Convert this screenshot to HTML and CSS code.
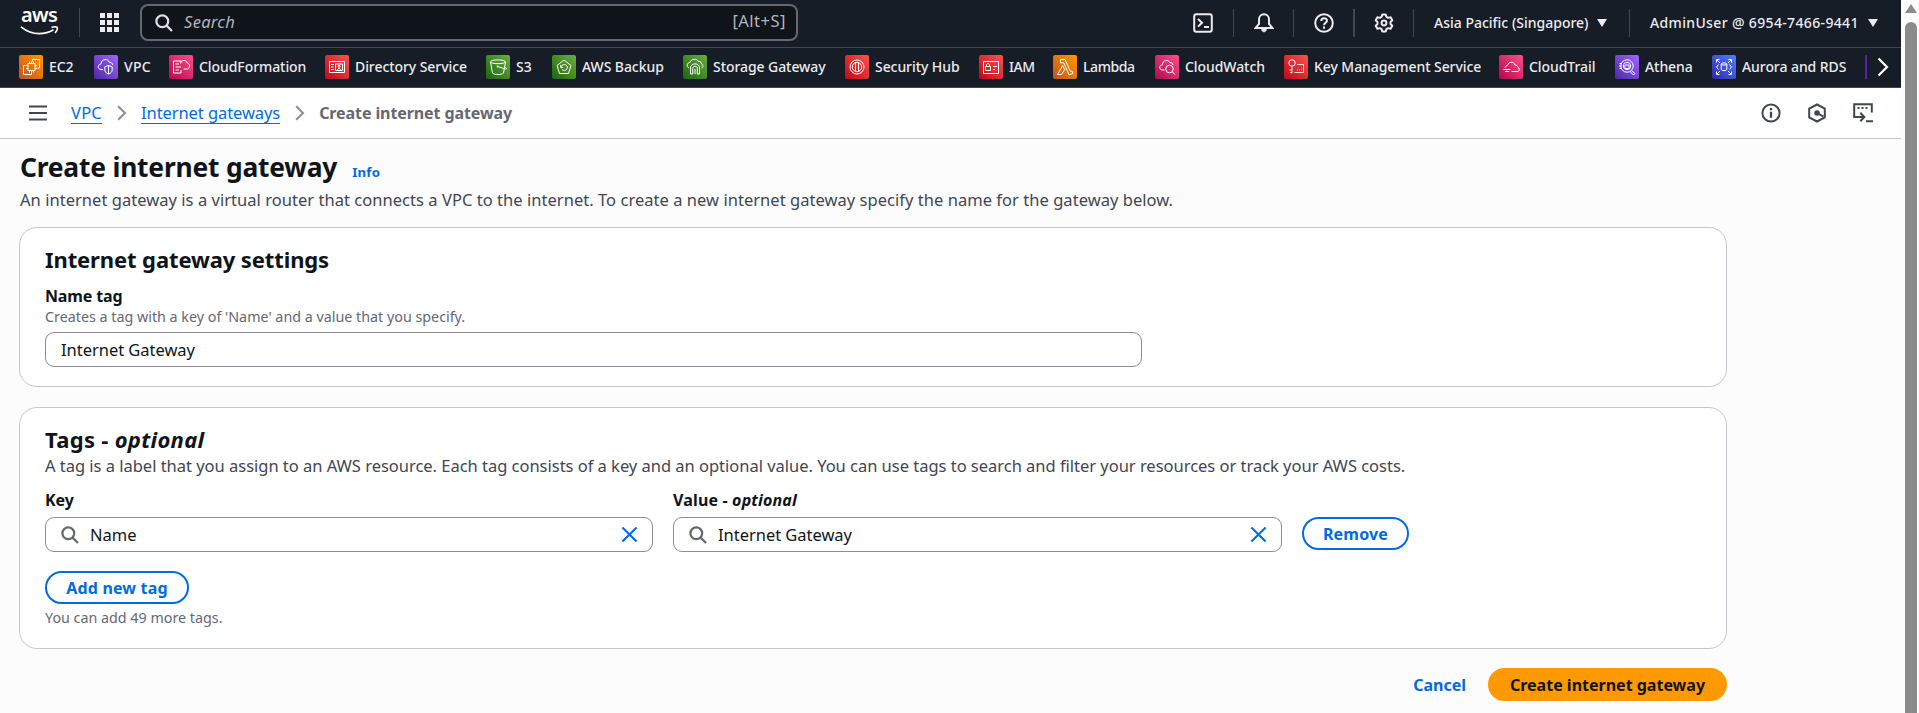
FILE: index.html
```html
<!DOCTYPE html>
<html lang="en">
<head>
<meta charset="utf-8">
<title>Create internet gateway | VPC</title>
<link rel="stylesheet" href="styles.css">
</head>
<body>
<svg class="defs" aria-hidden="true">
  <defs>
    <linearGradient id="orange" x1="0" y1="1" x2="1" y2="0"><stop offset="0" stop-color="#c8511b"/><stop offset="1" stop-color="#ff9900"/></linearGradient>
    <linearGradient id="purple" x1="0" y1="1" x2="1" y2="0"><stop offset="0" stop-color="#4d27a8"/><stop offset="1" stop-color="#a166ff"/></linearGradient>
    <linearGradient id="pink" x1="0" y1="1" x2="1" y2="0"><stop offset="0" stop-color="#b0084d"/><stop offset="1" stop-color="#ff4f8b"/></linearGradient>
    <linearGradient id="red" x1="0" y1="1" x2="1" y2="0"><stop offset="0" stop-color="#bd0816"/><stop offset="1" stop-color="#ff5252"/></linearGradient>
    <linearGradient id="green" x1="0" y1="1" x2="1" y2="0"><stop offset="0" stop-color="#1b660f"/><stop offset="1" stop-color="#6cae3e"/></linearGradient>
    <linearGradient id="blue" x1="0" y1="1" x2="1" y2="0"><stop offset="0" stop-color="#2e27ad"/><stop offset="1" stop-color="#527fff"/></linearGradient>
    <symbol id="search" viewBox="0 0 18 18"><circle cx="7.3" cy="7.3" r="5.9"/><path d="M11.6 11.6L17 17"/></symbol>
    <symbol id="close" viewBox="0 0 18 18"><path d="M1.5 1.5l15 15M16.5 1.5l-15 15"/></symbol>
  </defs>
</svg>
<div class="shell">
<div class="page">
<header class="topbar">
  <div class="logo"><span class="logo-text">aws</span>
    <svg class="logo-smile" viewBox="0 0 39 10"><path d="M1 .8C6.500 5.200 12.500 7.600 19 7.600c5.500 0 10.500-1.400 14.500-3.900" /><path d="M31.500 1.600c2-.8 4.500-.9 5.600-.4.500 1.200-.4 4-2.100 5.800"/></svg>
  </div>
  <div class="apps"><svg width="20" height="20" viewBox="0 0 20 20"><path d="M0 0h5v5H0zM7 0h5v5H7zM14 0h5v5h-5zM0 7h5v5H0zM7 7h5v5H7zM14 7h5v5h-5zM0 14h5v5H0zM7 14h5v5H7zM14 14h5v5h-5z"/></svg></div>
  <div class="search"><svg class="ico search-ico"><use href="#search"/></svg><span class="search-text">Search</span><span class="search-key">[Alt+S]</span></div>
  <div class="tools">
    <div class="tool"><svg width="20" height="20" viewBox="0 0 20 20"><rect x="1.200" y="1.200" width="17.600" height="17.600" rx="2"/><path d="M5 6l4 3.800-4 3.800M11 14h5"/></svg></div>
    <div class="tool"><svg width="20" height="20" viewBox="0 0 20 20"><path d="M10 1.300c-3.200 0-5 2.300-5 5.200v4.300L1.500 15h17L15 10.800V6.500c0-2.900-1.800-5.200-5-5.200z"/><path d="M7.700 16.500c.3 3 4.300 3 4.600 0z" fill="#ebebf0" stroke-width="1"/></svg></div>
    <div class="tool"><svg width="20" height="20" viewBox="0 0 20 20"><circle cx="10" cy="10" r="8.800"/><path d="M7.200 8c0-3.800 5.800-3.600 5.800-.3 0 2-3 2.100-3 4.500M10 13.500v2.200"/></svg></div>
    <div class="tool strong"><svg width="20" height="20" viewBox="0 0 20 20"><path d="M8.300 1.400h3.400l.7 2.500 1.700 1 2.500-.7 1.700 3-1.800 1.800v2l1.800 1.800-1.700 3-2.500-.7-1.700 1-.7 2.500H8.300l-.7-2.500-1.700-1-2.500.7-1.700-3L3.500 11V9L1.700 7.200l1.700-3 2.500.7 1.700-1z" stroke-linejoin="round"/><circle cx="10" cy="10" r="2.400"/></svg></div>
    <div class="tool region"><span>Asia Pacific (Singapore)</span><i class="caret"></i></div>
    <div class="tool account"><span>AdminUser @ 6954-7466-9441</span><i class="caret"></i></div>
  </div>
</header>
<nav class="favorites">
  <a class="fav"><svg viewBox="0 0 24 24"><rect width="24" height="24" rx="2" fill="url(#orange)"/><path d="M9 8.500h7v7H9zM10.500 6.500v2M12.500 6.500v2M14.500 6.500v2M10.500 15.500v2M12.500 15.500v2M14.500 15.500v2M7 10.500h2M7 13.500h2M16 10.500h2M16 13.500h2M13.500 6.500v-2h7v8.500h-2M6.500 10.500h-2v9h8v-2"/></svg><span>EC2</span></a>
  <a class="fav"><svg viewBox="0 0 24 24"><rect width="24" height="24" rx="2" fill="url(#purple)"/><path d="M9 14.500H7c-3.800-.3-3.500-5 0-5.500C7.200 3.300 14.500 3.500 15.500 7.500c2-.4 3 1 3.200 2.500M14.500 10.500l3.700 1.300v3c0 2-1.400 3.500-3.700 4.200-2.300-.7-3.700-2.200-3.700-4.200v-3zM14.500 10.500V19"/></svg><span class="loose">VPC</span></a>
  <a class="fav"><svg viewBox="0 0 24 24"><rect width="24" height="24" rx="2" fill="url(#pink)"/><path d="M12 7.500V6H4.500v12H12v-3M6.500 9H10M6.500 12H12M6.500 15H10M11.500 8.500c.5-3.800 6-4 6.700-.5 3.300.3 3.200 5.500.3 6h-4"/></svg><span>CloudFormation</span></a>
  <a class="fav"><svg viewBox="0 0 24 24"><rect width="24" height="24" rx="2" fill="url(#red)"/><path d="M4.500 6.500h15v11h-15zM10.500 9h7v6.500h-7zM6 9.500h3M6 12h2.500M6 14.500h3M12.500 15.500c0-3 3-3 3 0"/><circle cx="14" cy="11.300" r="1"/></svg><span>Directory Service</span></a>
  <a class="fav"><svg viewBox="0 0 24 24"><rect width="24" height="24" rx="2" fill="url(#green)"/><ellipse cx="12" cy="6.800" rx="7.500" ry="1.900"/><path d="M4.500 7l2 11c1.500 2 9.500 2 11 0l2-11M11.500 11.500l8 2.500c2 .3 1-1-1-2"/><circle cx="11.500" cy="11.500" r=".6"/></svg><span>S3</span></a>
  <a class="fav"><svg viewBox="0 0 24 24"><rect width="24" height="24" rx="2" fill="url(#green)"/><path d="M12 5l7 5.500-2.500 8h-9L5 10.500zM8.700 10v2.500h2.500M9 12c1.300-4 6.800-2.500 6.300.8-.4 2.700-3.800 3.500-5.500 1.500"/></svg><span>AWS Backup</span></a>
  <a class="fav"><svg viewBox="0 0 24 24"><rect width="24" height="24" rx="2" fill="url(#green)"/><path d="M6 13c-3-1.500-2-5.500 1-5.500C8 3.300 14 3.500 15.500 6.500c2.200-.5 3 1.500 3 2.500 2 .8 1.700 3.500 0 4M7.500 19v-6c0-5.500 9-5.500 9 0v6M9.700 19v-5.500c0-3 4.600-3 4.600 0V19M12 14v5M7.500 19h2.200M14.300 19h2.200"/></svg><span>Storage Gateway</span></a>
  <a class="fav"><svg viewBox="0 0 24 24"><rect width="24" height="24" rx="2" fill="url(#red)"/><circle cx="12" cy="12" r="7"/><circle cx="12" cy="12" r="4.700"/><path d="M10.500 8v8M13.500 8v8"/></svg><span>Security Hub</span></a>
  <a class="fav"><svg viewBox="0 0 24 24"><rect width="24" height="24" rx="2" fill="url(#red)"/><path d="M4.500 6.500h15v12h-15zM6.500 11.500h5v4h-5zM7.500 11.500v-1.500c0-2 3-2 3 0v1.500M14 11.500h4M14 14.500h2"/></svg><span class="tight">IAM</span></a>
  <a class="fav"><svg viewBox="0 0 24 24"><rect width="24" height="24" rx="2" fill="url(#orange)"/><path d="M7.500 4.500h4.500l5.500 12 1.500-.5 1 2.500-4 1.300-5.300-12H7.500zM9.700 10.500L4.500 19.500h4l3.200-5z"/></svg><span class="tight">Lambda</span></a>
  <a class="fav"><svg viewBox="0 0 24 24"><rect width="24" height="24" rx="2" fill="url(#pink)"/><path d="M9.500 15H7.500c-4-.5-3.500-5 0-5.300C7.700 4.500 13.500 4.300 15 7.700c2-.3 3 1 3 2.300M17.300 16.700l2.500 2.800"/><circle cx="14.500" cy="14" r="3.800"/></svg><span>CloudWatch</span></a>
  <a class="fav"><svg viewBox="0 0 24 24"><rect width="24" height="24" rx="2" fill="url(#red)"/><circle cx="8" cy="8" r="3.200"/><path d="M8 11.200v7.300M5.500 15H8M6 17.500h2M13 9.500h6.500v8h-9M13 15h1M15 15h1M17 15h1" stroke-opacity=".8"/></svg><span>Key Management Service</span></a>
  <a class="fav"><svg viewBox="0 0 24 24"><rect width="24" height="24" rx="2" fill="url(#pink)"/><path d="M6 12.500c.3-1.500 1.500-2 2.500-2C9 6.500 15 6 16 10c2 0 2.500 1 2.700 2 2.300 1 2 4.500-.7 4.500H12.500M4.500 14.500h7M6 16.500h4"/></svg><span>CloudTrail</span></a>
  <a class="fav"><svg viewBox="0 0 24 24"><rect width="24" height="24" rx="2" fill="url(#purple)"/><circle cx="12" cy="11" r="6.200"/><circle cx="12" cy="11" r="3.700"/><path d="M16.500 15.500l3.500 3-1.500 1.500-3.500-3.500M4.500 8.500H7M4 11h3M4.500 13.500H7M10 10h4v3.500h-4z"/></svg><span>Athena</span></a>
  <a class="fav"><svg viewBox="0 0 24 24"><rect width="24" height="24" rx="2" fill="url(#blue)"/><ellipse cx="12" cy="9" rx="2.800" ry="1.100"/><path d="M9.200 9v5.500c0 1.500 5.600 1.500 5.600 0V9M4.500 7.500v-3h3M5 5l3 3M16.500 4.500h3v3M19 5l-3 3M4.500 16.500v3h3M5 19l3-3M16.500 19.500h3v-3M19 19l-3-3M6.500 9.500L4.500 12l2 2.500M17.500 9.500l2 2.500-2 2.500"/></svg><span>Aurora and RDS</span></a>
  <i class="fav-peek"></i>
  <svg class="fav-next" viewBox="0 0 12 20"><path d="M1.500 1.500l8.500 8.500-8.500 8.500"/></svg>
</nav>
<div class="crumbbar">
  <svg class="burger" viewBox="0 0 18 16"><path d="M0 1.500h18M0 8h18M0 14.500h18"/></svg>
  <a class="crumb crumb-first">VPC</a>
  <svg class="chev" viewBox="0 0 10 16"><path d="M1.200 1.200L8 8l-6.800 6.800"/></svg>
  <a class="crumb">Internet gateways</a>
  <svg class="chev" viewBox="0 0 10 16"><path d="M1.200 1.200L8 8l-6.800 6.800"/></svg>
  <span class="crumb-here">Create internet gateway</span>
  <div class="page-tools">
    <svg width="20" height="20" viewBox="0 0 20 20"><circle cx="10" cy="10" r="8.600"/><path d="M10 5v2.300M10 8.800v6" stroke-width="2.300"/></svg>
    <svg width="20" height="20" viewBox="0 0 20 20"><path d="M10 1.500l7.800 4.200v8.600L10 18.500l-7.800-4.200V5.700z"/><circle class="dot" cx="10" cy="10" r="2.800"/><path d="M10 10l6.500 3.700"/></svg>
    <svg width="20" height="20" viewBox="0 0 20 20"><path d="M7 14H1.200V1.200h17.600v8.300M4 14h6.500M7.300 9.700l4 4.300-4 4.300M13 18.200h7"/><path d="M4.500 5h2M8.500 5h2M12.500 5h2" stroke-width="2"/></svg>
  </div>
</div>
<main class="main">
  <div class="title"><h1>Create internet gateway</h1><a class="info">Info</a></div>
  <p class="desc intro">An internet gateway is a virtual router that connects a VPC to the internet. To create a new internet gateway specify the name for the gateway below.</p>
  <section class="card settings">
    <h2>Internet gateway settings</h2>
    <div class="label">Name tag</div>
    <div class="hint">Creates a tag with a key of 'Name' and a value that you specify.</div>
    <div class="input name-input">Internet Gateway</div>
  </section>
  <section class="card tags">
    <h2>Tags - <em>optional</em></h2>
    <p class="desc">A tag is a label that you assign to an AWS resource. Each tag consists of a key and an optional value. You can use tags to search and filter your resources or track your AWS costs.</p>
    <div class="tag-grid">
      <div><div class="label">Key</div>
        <div class="input"><svg class="ico field-ico"><use href="#search"/></svg><span>Name</span><svg class="clear"><use href="#close"/></svg></div></div>
      <div><div class="label value-label">Value - <em>optional</em></div>
        <div class="input"><svg class="ico field-ico"><use href="#search"/></svg><span>Internet Gateway</span><svg class="clear"><use href="#close"/></svg></div></div>
      <button class="btn remove">Remove</button>
    </div>
    <button class="btn add">Add new tag</button>
    <div class="hint">You can add 49 more tags.</div>
  </section>
  <div class="actions"><a class="cancel">Cancel</a><button class="btn primary">Create internet gateway</button></div>
</main>
</div>
<div class="scrollbar"><i class="arrow"></i><i class="thumb"></i></div>
</div>
</body>
</html>
```
FILE: styles.css
```css
* { box-sizing: border-box; }
body { margin: 0; height: 713px; overflow: hidden; background: #fcfcfd; color: #0f141a; font-family: "Noto Sans", "Open Sans", sans-serif; font-size: 16.5px; line-height: 22px; white-space: nowrap; }
h1, h2, p { margin: 0; }
svg { display: block; flex: none; fill: none; }
.defs { position: absolute; width: 0; height: 0; }
.shell { display: flex; height: 713px; }
.page { width: 1901px; flex: none; }

/* Top navigation */
.topbar { display: flex; align-items: center; height: 48px; padding-bottom: 2px; background: #161d26; border-bottom: 1px solid #424650; color: #ebebf0; }
.logo { display: flex; flex-direction: column; width: 80px; height: 29px; padding-left: 20px; border-right: 1px solid #424650; }
.logo-text { margin: -5px 0 0 1px; font-size: 20px; line-height: 23px; font-weight: 600; letter-spacing: -.7px; color: #fff; }
.logo-smile { width: 39px; height: 10px; stroke: #fff; stroke-width: 1.6; }
.apps { width: 60px; padding-left: 20px; }
.apps svg { fill: #ebebf0; }
.search { display: flex; align-items: center; width: 658px; height: 37px; padding: 0 10px 0 13px; border: 2px solid #656871; border-radius: 8px; background: #0f141a; }
.ico { width: 18px; height: 18px; stroke-width: 2.2; }
.search-ico { stroke: #dedee3; }
.search-text { margin: -2px 0 0 11px; font-style: italic; letter-spacing: .3px; color: #b4b4bb; }
.search-key { margin: -3px 0 0 auto; letter-spacing: .5px; color: #b4b4bb; }
.tools { display: flex; align-items: center; margin-left: auto; font-size: 14px; font-weight: 500; }
.tool { display: flex; align-items: center; justify-content: center; width: 60px; height: 28px; border-left: 1px solid #424650; }
.tool:first-child { border-left: 0; }
.tool svg { stroke: #ebebf0; stroke-width: 2; }
.tool.strong { border-left-width: 2px; }
.region, .account { justify-content: flex-start; padding-left: 20px; gap: 9px; }
.region { width: 216px; }
.account { width: 272px; letter-spacing: .35px; }
.caret { border: 5px solid transparent; border-top: 8px solid #ebebf0; border-bottom: 0; }

/* Favorites bar */
.favorites { display: grid; grid-template-columns: 75px 75px 156px 161px 66px 131px 162px 134px 74px 102px 129px 215px 116px 97px 153px 12px 1fr; align-items: center; height: 40px; padding-left: 19px; padding-bottom: 2px; background: #161d26; border-bottom: 1px solid #424650; color: #ebebf0; font-size: 14px; font-weight: 500; letter-spacing: -.07px; }
.fav { display: flex; align-items: center; gap: 6px; }
.fav svg { width: 24px; height: 24px; stroke: #fff; stroke-width: 1; }
.fav svg rect { stroke: none; }
.loose { letter-spacing: .3px; }
.tight { letter-spacing: -.4px; }
.fav-peek { width: 2px; height: 24px; background: #4d27a8; }
.fav-next { width: 12px; height: 20px; stroke: #fff; stroke-width: 2.2; }

/* Breadcrumbs */
.crumbbar { display: flex; align-items: center; height: 51px; padding: 0 28px 0 29px; background: #fff; border-bottom: 1px solid #c6c6cd; }
.burger { width: 18px; height: 16px; stroke: #424650; stroke-width: 2; }
.crumb { color: #006ce0; border-bottom: 1px solid #006ce0; line-height: 21px; letter-spacing: -.08px; }
.crumb-first { margin-left: 24px; letter-spacing: .23px; }
.chev { width: 10px; height: 16px; margin: 0 14px 0 15px; stroke: #8c8c94; stroke-width: 2; }
.crumb-here { font-size: 16px; font-weight: 700; letter-spacing: -.09px; color: #656871; }
.page-tools { display: flex; gap: 26px; margin-left: auto; }
.page-tools svg { stroke: #424650; stroke-width: 2; }
.page-tools .dot { fill: #424650; stroke: none; }

/* Page content */
.main { padding: 12px 0 0 19px; width: 1727px; }
.title { display: flex; align-items: baseline; gap: 15px; height: 33px; }
h1 { padding-left: 1px; font-size: 26.4px; line-height: 33px; font-weight: 700; letter-spacing: -.2px; }
.info { font-size: 13.2px; font-weight: 700; letter-spacing: .23px; color: #006ce0; }
.desc { color: #424650; letter-spacing: -.02px; }
.intro { margin: 5px 0 16px; padding-left: 1px; letter-spacing: .037px; }
.card { border: 1px solid #c6c6cd; border-radius: 18px; background: #fff; padding: 17px 25px 0; }
.settings { height: 160px; }
.tags { height: 242px; margin-top: 20px; }
h2 { font-size: 22px; line-height: 28px; font-weight: 700; letter-spacing: -.11px; }
.tags h2 { letter-spacing: .3px; }
.label { font-size: 16px; font-weight: 700; }
.value-label { letter-spacing: .16px; }
.settings .label { margin-top: 12px; letter-spacing: -.15px; }
.hint { margin-top: 1px; font-size: 14.3px; line-height: 18px; color: #656871; }
.input { display: flex; align-items: center; height: 35px; margin-top: 6px; border: 1px solid #8c8c94; border-radius: 9px; padding: 0 14px 0 15px; background: #fff; letter-spacing: -.03px; }
.name-input { width: 1097px; }
.tags .desc { margin-top: 2px; }
.tag-grid { display: grid; grid-template-columns: 608px 609px 107px; gap: 20px; align-items: end; margin-top: 12px; }
.field-ico { stroke: #656871; margin-right: 11px; }
.clear { width: 17px; height: 17px; margin-left: auto; stroke: #006ce0; stroke-width: 2.2; }
.btn { display: flex; align-items: center; justify-content: center; height: 33px; padding: 0; border: 2px solid #006ce0; border-radius: 17px; background: #fff; color: #006ce0; font: 700 16px/22px "Noto Sans", "Open Sans", sans-serif; letter-spacing: .18px; }
.remove { margin-bottom: 2px; }
.add { width: 144px; margin-top: 19px; }
.tags > .hint { margin-top: 5px; }
.actions { display: flex; justify-content: flex-end; align-items: center; gap: 22px; margin-top: 19px; }
.cancel { font-size: 16px; font-weight: 700; color: #006ce0; }
.primary { width: 239px; background: #ff9900; border-color: #ff9900; color: #0f141a; letter-spacing: 0; }

/* Window scrollbar */
.scrollbar { width: 18px; padding: 4px 0 0 4px; background: #fcfcfc; }
.arrow { display: block; width: 12px; border: 6px solid transparent; border-top: 0; border-bottom: 9px solid #8b8b8b; }
.thumb { display: block; width: 12px; height: 700px; margin-top: 9px; border-radius: 6px 6px 0 0; background: #8b8b8b; }
```
